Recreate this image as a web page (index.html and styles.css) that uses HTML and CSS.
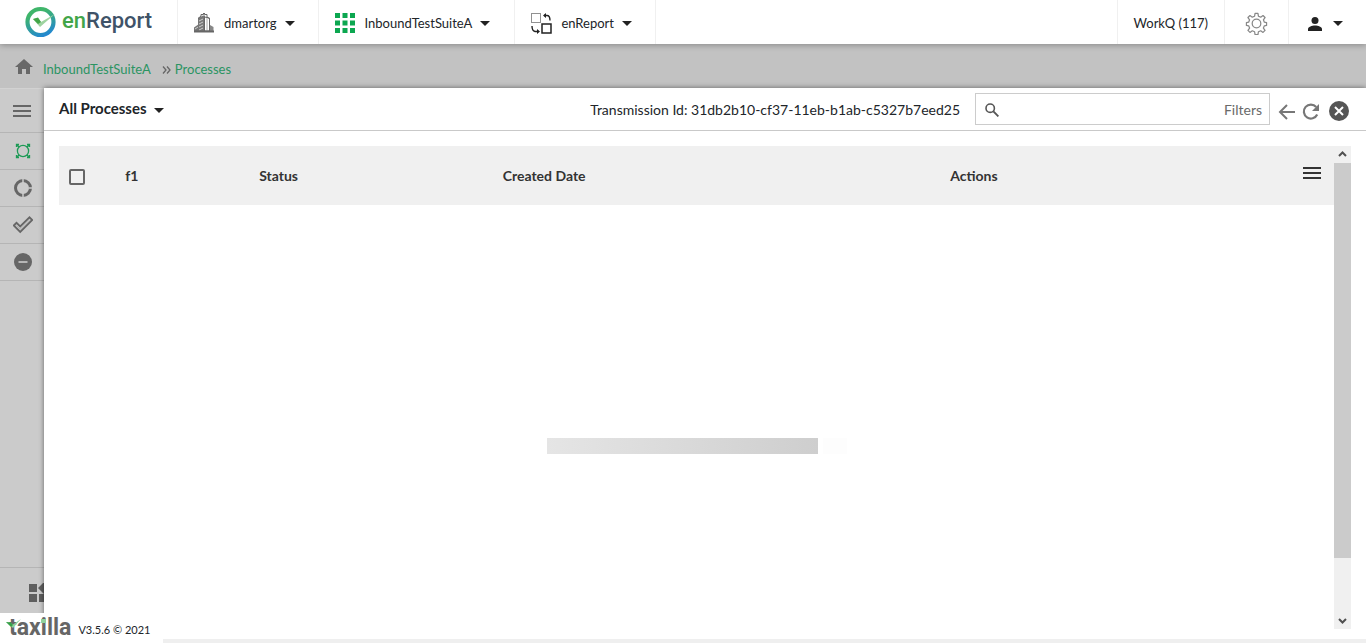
FILE: index.html
```html
<!DOCTYPE html>
<html lang="en">
<head>
<meta charset="utf-8">
<title>enReport - Processes</title>
<link rel="stylesheet" href="styles.css">
</head>
<body>
<header class="topbar">
  <a class="brand" href="#">
    <svg class="brand-mark" viewBox="0 0 32 32" aria-hidden="true">
      <defs><linearGradient id="ring" x1="0.3" y1="0" x2="0.7" y2="1"><stop offset="0.15" stop-color="#3fb56a"/><stop offset="1" stop-color="#2388d0"/></linearGradient></defs>
      <circle cx="15.500" cy="16" r="13" fill="none" stroke="url(#ring)" stroke-width="4.200"/>
      <path d="M8 13l5-1 3 4 14-8-15 13z" fill="#9ed3a0"/><path d="M8 13l5-1.500 3 4.500-3 2z" fill="#42a548"/>
    </svg>
    <span class="brand-name"><span class="brand-en">en</span>Report</span>
  </a>
  <nav class="menus">
    <button class="menu" type="button">
      <svg class="menu-icon" viewBox="0 0 20 20" aria-hidden="true"><path d="M4 18V5l5-2.500h2V18z" fill="#777"/><path d="M0 18.500v-4L5 11v7.500z" fill="#777"/><path d="M10.500 4l5 1v13h-5z" fill="#fff" stroke="#666"/><path d="M16 12l3.500 2v4.500H16z" fill="#888"/><path d="M4 5.500L7 3V1.500h2.500V0h1v1.500H13V4l3 2" fill="none" stroke="#666"/><path d="M5 8l4-2M5 11l4-2M5 14l4-2M1 16l3-2M5 17l4-2" stroke="#ccc"/><path d="M13 5v13" stroke="#aaa"/><path d="M0 18.500h20" stroke="#666" stroke-width="2"/></svg>
      <span>dmartorg</span><svg class="caret" viewBox="0 0 10 5" aria-hidden="true"><path d="M0 0h10L5 5z"/></svg>
    </button>
    <button class="menu menu-suite" type="button">
      <svg class="menu-icon" viewBox="0 0 20 20" fill="#0ca750" aria-hidden="true"><path d="M0 0h5v5H0zM7.500 0h5v5h-5zM15 0h5v5h-5zM0 7.500h5v5H0zM7.500 7.500h5v5h-5zM15 7.500h5v5h-5zM0 15h5v5H0zM7.500 15h5v5h-5zM15 15h5v5h-5z"/></svg>
      <span>InboundTestSuiteA</span><svg class="caret" viewBox="0 0 10 5" aria-hidden="true"><path d="M0 0h10L5 5z"/></svg>
    </button>
    <button class="menu" type="button">
      <svg class="menu-icon menu-icon-swap" viewBox="0 0 21 21" fill="none" stroke="#222" aria-hidden="true"><path d="M.5.5h9v9h-9z" stroke-dasharray="1 1"/><path d="M11 11h9v9h-9z" stroke-width="1.500"/><path d="M13 2.500h3q3 0 3 5M1 13q0 5 3 5.500h3" stroke-width="1.400"/><path d="M15 0v5l-3-2.500zM6 16v5l3-2.500z" fill="#222" stroke="none"/></svg>
      <span>enReport</span><svg class="caret" viewBox="0 0 10 5" aria-hidden="true"><path d="M0 0h10L5 5z"/></svg>
    </button>
  </nav>
  <a class="workq" href="#">WorkQ (117)</a>
  <button class="settings" type="button" aria-label="Settings">
    <svg class="gear" viewBox="0 0 24 24" fill="none" stroke="#888" stroke-width="1.300" aria-hidden="true"><path d="M10 4.400L10.500 1.500h3l.5 2.900 2.400 1 2.400-1.700 2.100 2.100-1.700 2.400 1 2.400 2.300.4v3l-2.300.4-1 2.400 1.700 2.400-2.100 2.100-2.400-1.700-2.400 1-.5 2.900h-3l-.5-2.900-2.400-1-2.400 1.700-2.100-2.100 1.700-2.400-1-2.400L1.500 14v-3l2.300-.4 1-2.400-1.700-2.400 2.100-2.100 2.400 1.700z" stroke-linejoin="round"/><circle cx="12" cy="12" r="4.500"/></svg>
  </button>
  <button class="account" type="button" aria-label="Account">
    <svg class="person" viewBox="0 0 14 14" aria-hidden="true"><circle cx="7" cy="3.500" r="3.500"/><path d="M0 14v-2c0-2.300 4-3.600 7-3.600s7 1.300 7 3.600v2z"/></svg>
    <svg class="caret" viewBox="0 0 10 5" aria-hidden="true"><path d="M0 0h10L5 5z"/></svg>
  </button>
</header>

<nav class="crumbs" aria-label="Breadcrumb">
  <a class="home" href="#" aria-label="Home"><svg viewBox="0 0 18 15" aria-hidden="true"><path d="M9 0l9 8h-3v7h-4v-5H7v5H3V8H0z" fill="#686868"/></svg></a>
  <a href="#">InboundTestSuiteA</a>
  <svg class="chevrons" viewBox="0 0 9 8" fill="none" stroke="#666" stroke-width="1.300" aria-hidden="true"><path d="M1 .5L4 4 1 7.500M5 .5L8 4 5 7.500"/></svg>
  <a href="#">Processes</a>
</nav>

<div class="workspace">
  <nav class="rail" aria-label="Views">
    <button class="rail-item rail-menu" type="button" aria-label="Menu"><svg viewBox="0 0 20 20" aria-hidden="true"><path d="M0 5h18M0 10h18M0 15h18" stroke="#666" stroke-width="2"/></svg></button>
    <button class="rail-item" type="button" aria-label="All"><svg viewBox="0 0 20 20" fill="none" stroke="#1c9a55" stroke-width="1.300" aria-hidden="true"><circle cx="10" cy="10" r="5.600"/><path d="M3.500 6V3.500H6M14 3.500h2.500V6M16.500 14v2.500H14M6 16.500H3.500V14M4 4l2 2M16 4l-2 2M16 16l-2-2M4 16l2-2"/></svg></button>
    <button class="rail-item" type="button" aria-label="In progress"><svg viewBox="0 0 20 20" aria-hidden="true"><circle cx="10" cy="10" r="7.500" fill="none" stroke="#666" stroke-width="3"/><path d="M10 0v5M10 15v5M16 10h4" stroke="#cbcbcb" stroke-width="1.500"/></svg></button>
    <button class="rail-item" type="button" aria-label="Completed"><svg viewBox="0 0 20 20" fill="none" stroke="#666" stroke-width="1.800" aria-hidden="true"><path d="M.8 10.500l2.700-2.700 3.700 3.700L16.500 2.300l2.700 2.700L7.200 17z"/><path d="M3.500 10.500l3.700 3.700 9.500-9.300" stroke="#b0b0b0" stroke-width="1"/></svg></button>
    <button class="rail-item" type="button" aria-label="Stopped"><svg viewBox="0 0 20 20" aria-hidden="true"><circle cx="10" cy="10" r="9" fill="#666"/><path d="M5.500 10h9" stroke="#cbcbcb" stroke-width="1.600"/></svg></button>
    <button class="rail-item rail-apps" type="button" aria-label="Apps"><svg viewBox="0 0 20 20" fill="#5f5f5f" aria-hidden="true"><path d="M0 1h8v8H0zM0 11h8v8H0zM10 11h8v8h-8zM9 5l6-6 6 6-6 6z"/></svg></button>
  </nav>

  <main class="panel">
    <div class="panel-head">
      <button class="title" type="button">All Processes<svg class="caret" viewBox="0 0 10 5" aria-hidden="true"><path d="M0 0h10L5 5z"/></svg></button>
      <span class="transmission">Transmission Id: 31db2b10-cf37-11eb-b1ab-c5327b7eed25</span>
      <div class="search">
        <svg class="lens" viewBox="0 0 14 14" fill="none" stroke="#555" aria-hidden="true"><circle cx="5.200" cy="5.200" r="4.200" stroke-width="1.600"/><path d="M8.400 8.400l5 5" stroke-width="1.900"/></svg>
        <input class="search-input" type="text" aria-label="Search processes">
        <button class="filters" type="button">Filters</button>
      </div>
      <div class="tools">
        <button class="tool" type="button" aria-label="Back"><svg viewBox="0 0 20 20" fill="none" stroke="#777" stroke-width="2" aria-hidden="true"><path d="M18 11H3M10 4l-7 7 7 7"/></svg></button>
        <button class="tool" type="button" aria-label="Refresh"><svg viewBox="0 0 20 20" aria-hidden="true"><path d="M16.200 13.500a7 7 0 1 1-1-7.500" fill="none" stroke="#777" stroke-width="2.200"/><path d="M18 3v7h-7z" fill="#777"/></svg></button>
        <button class="tool tool-close" type="button" aria-label="Close"><svg viewBox="0 0 20 20" aria-hidden="true"><circle cx="10" cy="10" r="10" fill="#555"/><path d="M6 6l8 8M14 6l-8 8" stroke="#fff" stroke-width="2"/></svg></button>
      </div>
    </div>
    <div class="panel-body">
      <div class="list">
        <table class="grid">
          <colgroup><col class="c-check"><col class="c-f1"><col class="c-status"><col class="c-date"><col class="c-actions"><col></colgroup>
          <thead><tr>
            <th class="check-cell"><input class="check" type="checkbox" aria-label="Select all"></th>
            <th>f1</th><th>Status</th><th>Created Date</th><th>Actions</th>
            <th><button class="columns" type="button" aria-label="Columns"><svg viewBox="0 0 18 12" aria-hidden="true"><path d="M0 1h18M0 6h18M0 11h18" stroke="#333" stroke-width="2"/></svg></button></th>
          </tr></thead>
        </table>
        <div class="loader" role="progressbar" aria-label="Loading"><div class="loader-fill"></div><div class="loader-trail"></div></div>
      </div>
      <div class="scroll" aria-hidden="true">
        <svg class="scroll-arrow" viewBox="0 0 17 17" fill="none" stroke="#505050" stroke-width="2"><path d="M5 10l3.500-3.500L12 10"/></svg>
        <div class="scroll-track"><div class="scroll-thumb"></div></div>
        <svg class="scroll-arrow" viewBox="0 0 17 17" fill="none" stroke="#505050" stroke-width="2"><path d="M5 7l3.500 3.500L12 7"/></svg>
      </div>
    </div>
  </main>
</div>

<footer class="footer">
  <span class="maker">taxilla<svg class="maker-tick" viewBox="0 0 48 10" aria-hidden="true"><path d="M0 3l5 1 2 1.500L15 0 7 9z" fill="#8fd19b"/><path d="M0 3l5 .5L7 6 5 8z" fill="#35a04a"/><path d="M35 0h5v4h-5z" fill="#8fd19b"/></svg></span>
  <span class="version">V3.5.6 © 2021</span>
</footer>
</body>
</html>
```
FILE: styles.css
```css
* { box-sizing: border-box; }
body {
  margin: 0;
  min-height: 100vh;
  display: flex;
  flex-direction: column;
  font: 14px/20px Lato, "Liberation Sans", sans-serif;
  color: #212529;
  background: #efefef;
}
button {
  font: inherit;
  color: inherit;
  background: none;
  border: 0;
  padding: 0;
}
a { text-decoration: none; color: inherit; }
svg { display: block; }
.caret { width: 10px; height: 5px; fill: #222; }

.topbar {
  display: flex;
  height: 44px;
  font-size: 13px;
  background: #fff;
  box-shadow: 0 1px 6px rgba(0, 0, 0, .3);
  z-index: 3;
}
.brand {
  display: flex;
  align-items: center;
  gap: 5px;
  width: 177px;
  padding-left: 25px;
}
.brand-mark { width: 32px; height: 32px; }
.brand-name {
  font: 500 22px/28px Roboto, sans-serif;
  color: #3f5368;
  padding-bottom: 2px;
}
.brand-en { color: #42a548; }
.menus { display: flex; flex: 1; }
.menu {
  display: flex;
  align-items: center;
  padding: 2px 23px 0 16px;
  border-left: 1px solid #f0f0f0;
}
.menu-suite { padding-right: 24px; }
.menu:last-child { border-right: 1px solid #f0f0f0; }
.menu-icon { width: 20px; height: 20px; margin-right: 10px; }
.menu-icon-swap { width: 21px; height: 21px; margin-right: 9px; }
.menu .caret { margin-left: 8px; }
.workq, .settings, .account {
  display: flex;
  align-items: center;
  padding: 2px 16px 0;
  border-left: 1px solid #f0f0f0;
}
.settings { padding: 3px 20px 0; }
.gear { width: 23px; height: 23px; }
.account { gap: 11px; padding: 3px 23px 0 19px; }
.person { width: 14px; height: 14px; fill: #222; }

.crumbs {
  display: flex;
  align-items: center;
  height: 44px;
  padding: 6px 15px 0;
  font-size: 13px;
  background: #c2c2c2;
  color: #2b9462;
}
.home { margin: 0 10px 5px 0; }
.home svg { width: 18px; height: 15px; }
.chevrons { width: 9px; height: 8px; margin: 2px 4px 0 11px; }

.workspace { display: flex; flex: 1; margin-bottom: 4px; }
.rail {
  display: flex;
  flex-direction: column;
  width: 44px;
  background: #cbcbcb;
  overflow: hidden;
  border-top: 1px solid #d2d2d2;
}
.rail-item {
  display: flex;
  align-items: center;
  justify-content: center;
  height: 37px;
  padding-left: 2px;
  border-bottom: 1px solid #b5b5b5;
}
.rail-item svg { width: 20px; height: 20px; flex: none; }
.rail-menu { height: 44px; }
.rail-apps {
  justify-content: flex-start;
  margin-top: auto;
  height: 72px;
  padding: 0 0 22px 29px;
  border-top: 1px solid #b5b5b5;
  border-bottom: 0;
}
.panel {
  display: flex;
  flex-direction: column;
  flex: 1;
  background: #fff;
  box-shadow: 0 0 5px rgba(0, 0, 0, .5);
  clip-path: inset(-6px 0 0 -6px);
  z-index: 1;
}
.panel-head {
  display: flex;
  align-items: center;
  height: 43px;
  padding: 0 17px 0 15px;
  border-bottom: 1px solid #c9c9c9;
}
.title {
  display: flex;
  align-items: center;
  gap: 7px;
  margin-right: auto;
  padding-bottom: 2px;
  font-size: 15px;
  font-weight: bold;
}
.title .caret { margin-top: 4px; }
.transmission { margin-right: 15px; padding-top: 2px; }
.search {
  display: flex;
  align-items: center;
  width: 295px;
  height: 32px;
  padding: 1px 7px 0 9px;
  border: 1px solid #ccc;
}
.lens { width: 14px; height: 14px; flex: none; }
.search-input {
  flex: 1;
  min-width: 0;
  border: 0;
  outline: 0;
  background: none;
  font: inherit;
}
.filters { color: #6a6a6a; }
.tools { display: flex; gap: 4px; margin-left: 7px; padding-top: 3px; }
.tool svg { width: 20px; height: 20px; }
.tool-close { margin-left: 4px; }

.panel-body { display: flex; flex: 1; padding: 15px 15px 10px; }
.list { flex: 1; }
.grid {
  width: 100%;
  table-layout: fixed;
  border-collapse: collapse;
  background: #f0f0f0;
}
.grid th {
  height: 59px;
  padding: 0;
  text-align: left;
  color: #333;
}
.grid .check-cell { padding: 2px 0 0 10px; }
.c-check { width: 5.2%; }
.c-f1 { width: 10.5%; }
.c-status { width: 19.1%; }
.c-date { width: 35.1%; }
.c-actions { width: 27.7%; }
.check {
  display: block;
  appearance: none;
  width: 16px;
  height: 16px;
  margin: 0;
  border: 2px solid #666;
  border-radius: 2px;
}
.columns { display: block; padding-bottom: 5px; }
.columns svg { width: 18px; height: 12px; }
.loader {
  display: flex;
  gap: 5px;
  width: 300px;
  height: 16px;
  margin: 233px auto 0;
}
.loader-fill { width: 271px; background: linear-gradient(90deg, #e5e5e5, #cecece); }
.loader-trail { flex: 1; background: #fdfdfd; }
.scroll {
  display: flex;
  flex-direction: column;
  width: 17px;
  background: #f0f0f0;
}
.scroll-arrow { width: 17px; height: 17px; }
.scroll-track { flex: 1; }
.scroll-thumb { height: 88%; background: #cbcbcb; }

.footer {
  position: fixed;
  left: 0;
  bottom: 0;
  display: flex;
  align-items: center;
  gap: 7px;
  width: 163px;
  height: 30px;
  padding-left: 9px;
  background: #fff;
  z-index: 4;
}
.maker {
  position: relative;
  font: bold 23px/28px Roboto, sans-serif;
  color: #666;
}
.maker-tick {
  position: absolute;
  left: -3px;
  top: 5px;
  width: 48px;
  height: 10px;
}
.version { font-size: 11px; padding-top: 4px; }
```
